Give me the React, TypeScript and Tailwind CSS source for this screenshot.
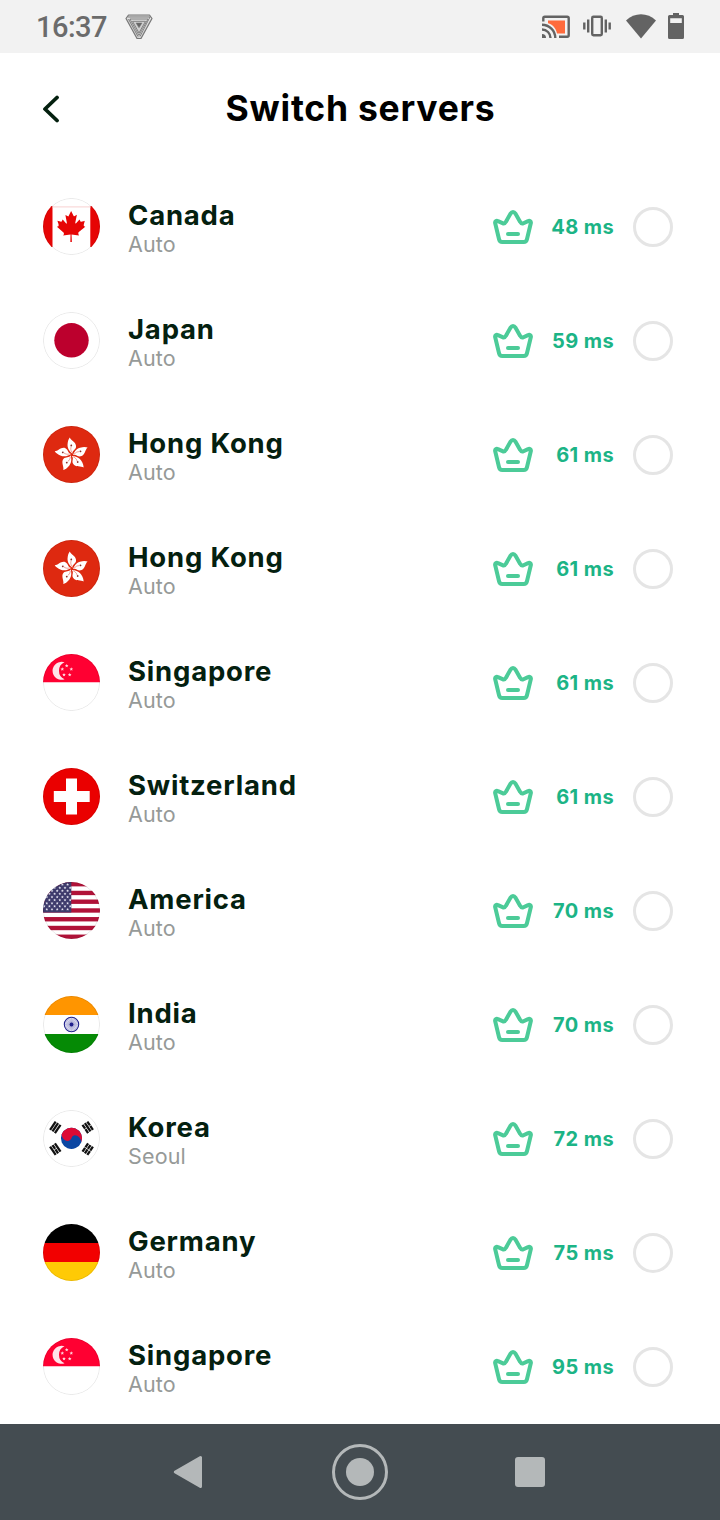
import type { ReactNode } from 'react';
import { useState } from 'react';

interface Server {
  id: number;
  country: string;
  city: string;
  ping: number;
  flag: ReactNode;
}

const FIVE = [0, 72, 144, 216, 288];

function Star({ x, y, r }: { x: number; y: number; r: number }) {
  const points = Array.from({ length: 10 }, (_, i) => {
    const a = (Math.PI / 5) * i - Math.PI / 2;
    const d = i % 2 === 0 ? r : r * 0.45;
    return `${(x + d * Math.cos(a)).toFixed(2)},${(y + d * Math.sin(a)).toFixed(2)}`;
  }).join(' ');
  return <polygon points={points} />;
}

const Canada = (
  <>
    <path fill="#fff" d="M0 0h57v57H0z" />
    <path fill="#e60505" d="M0 8h9.5v41H0zM47.3 8H57v41h-9.7z" />
    <path stroke="#f6c4c4" strokeWidth=".8" d="M9 8.9h39" />
    <path
      fill="#e60505"
      transform="translate(-6.9 2.4) scale(.111)"
      d="M201 232l-13.3 4.4 61.4 54c4.7 13.7-1.6 17.8-5.6 25l66.6-8.4-1.6 67 13.9-.3-3.1-66.6 66.7 8c-4.1-8.7-7.8-13.3-4-27.2l61.3-51-10.7-4c-8.8-6.8 3.8-32.6 5.6-48.9 0 0-35.7 12.3-38 5.8l-9.2-17.5-32.6 35.8c-3.5.9-5-.5-5.9-3.5l15-74.8-23.8 13.4q-3.2 1.3-5.2-2.2l-23-46-23.6 47.8q-2.8 2.5-5 .7L264 130.8l13.7 74.1c-1.1 3-3.7 3.8-6.7 2.2l-31.2-35.3c-4 6.5-6.8 17.1-12.2 19.5s-23.5-4.5-35.6-7c4.2 14.8 17 39.6 9 47.7"
    />
  </>
);

const Japan = (
  <>
    <path fill="#fff" d="M0 0h57v57H0z" />
    <circle cx="28.5" cy="28.3" r="17.2" fill="#bc002d" />
  </>
);

const HongKong = (
  <>
    <path fill="#de2910" d="M0 0h57v57H0z" />
    <g transform="translate(28.8 28.8)">
      {FIVE.map((a) => (
        <g key={a} transform={`rotate(${a + 6})`}>
          <path fill="#fff" d="M.5-1C-1.5-2.5-5-5-5.300-9.500C-5.500-13-4.800-15.500-3.800-17C-2.800-14.200 3.400-13 3.400-8.500C3.400-5-.3-4.500 .5-1Z" />
          <path stroke="#de2910" strokeWidth=".4" d="M-.2-2.500C-1.500-4-2-6-1.500-8" />
          <circle cx="-1.5" cy="-9.2" r=".9" fill="#8e3028" />
        </g>
      ))}
    </g>
  </>
);

const Singapore = (
  <>
    <path fill="#fff" d="M0 0h57v57H0z" />
    <path fill="#ff0032" d="M0 0h57v28.3H0z" />
    <path fill="#ffe3e9" d="M21.500 8.300A9 9 0 1 0 21.500 25.300A9.300 9.300 0 0 1 21.500 8.300Z" />
    <g fill="#ffd5de">
      <Star x={23.7} y={11.8} r={1.9} />
      <Star x={19.3} y={15.2} r={1.9} />
      <Star x={28.3} y={15.2} r={1.9} />
      <Star x={21} y={20.8} r={1.9} />
      <Star x={26.7} y={20.8} r={1.9} />
    </g>
  </>
);

const Switzerland = (
  <>
    <path fill="#ea0000" d="M0 0h57v57H0z" />
    <path fill="#fff" d="M23 10.400h11v12.600h12.700v11H34v12.400H23V34H10.800V23H23z" />
  </>
);

const America = (
  <>
    <path fill="#fff" d="M0 0h57v57H0z" />
    {[0, 2, 4, 6, 8, 10, 12].map((i) => (
      <rect key={i} y={i * 4.38} width="57" height="4.38" fill="#b01238" />
    ))}
    <path fill="#3e3b6c" d="M0 0h28.300v30.500H0z" />
    <g fill="#e4e3f0">
      {[0, 1, 2, 3, 4, 5, 6, 7, 8].map((row) =>
        [0, 1, 2, 3, 4, 5].map((col) => (
          <Star
            key={`${row}-${col}`}
            x={(row % 2 ? 1.2 : -1.4) + col * 5.2}
            y={2.6 + row * 3.1}
            r={1.5}
          />
        ))
      )}
    </g>
  </>
);

const India = (
  <>
    <path fill="#fff" d="M0 0h57v57H0z" />
    <path fill="#ff9500" d="M0 0h57v19H0z" />
    <path fill="#058a05" d="M0 37.900h57V57H0z" />
    <circle cx="28.5" cy="28.5" r="7.2" fill="#e2e2f2" stroke="#20208c" strokeWidth="1.1" />
    {Array.from({ length: 12 }, (_, i) => (
      <path
        key={i}
        d="M28.500 22v13"
        stroke="#5555a8"
        strokeWidth=".25"
        transform={`rotate(${i * 15} 28.5 28.5)`}
      />
    ))}
    <circle cx="28.5" cy="28.5" r="1.9" fill="#20208c" />
  </>
);

function Trigram({ x, y, angle, split }: { x: number; y: number; angle: number; split: boolean[] }) {
  return (
    <g transform={`translate(${x} ${y}) rotate(${angle})`}>
      {split.map((s, i) => (
        <path
          key={i}
          d={s ? 'M-5 0h4.700M.3 0h4.700' : 'M-5 0h10'}
          transform={`translate(0 ${(i - 1) * 2.9})`}
          stroke="#111"
          strokeWidth="2.3"
        />
      ))}
    </g>
  );
}

const Korea = (
  <>
    <path fill="#fff" d="M0 0h57v57H0z" />
    <g transform="translate(28.5 28.3) rotate(22)">
      <circle r="10.6" fill="#0b46a3" />
      <path fill="#dd0a35" d="M-10.600 0A10.600 10.600 0 0 1 10.600 0C8.500-5-.5-6.500 0 0C-.5 6.500-8.500 5-10.600 0Z" />
    </g>
    <Trigram x={12.3} y={17.3} angle={-56} split={[false, false, false]} />
    <Trigram x={44.7} y={17.3} angle={56} split={[true, false, true]} />
    <Trigram x={12.3} y={39.2} angle={56} split={[false, true, false]} />
    <Trigram x={44.7} y={39.2} angle={-56} split={[true, true, true]} />
  </>
);

const Germany = (
  <>
    <path fill="#000" d="M0 0h57v19.100H0z" />
    <path fill="#f20000" d="M0 19.100h57v19H0z" />
    <path fill="#ffca05" d="M0 38.100h57V57H0z" />
  </>
);

const servers: Server[] = [
  { id: 1, country: 'Canada', city: 'Auto', ping: 48, flag: Canada },
  { id: 2, country: 'Japan', city: 'Auto', ping: 59, flag: Japan },
  { id: 3, country: 'Hong Kong', city: 'Auto', ping: 61, flag: HongKong },
  { id: 4, country: 'Hong Kong', city: 'Auto', ping: 61, flag: HongKong },
  { id: 5, country: 'Singapore', city: 'Auto', ping: 61, flag: Singapore },
  { id: 6, country: 'Switzerland', city: 'Auto', ping: 61, flag: Switzerland },
  { id: 7, country: 'America', city: 'Auto', ping: 70, flag: America },
  { id: 8, country: 'India', city: 'Auto', ping: 70, flag: India },
  { id: 9, country: 'Korea', city: 'Seoul', ping: 72, flag: Korea },
  { id: 10, country: 'Germany', city: 'Auto', ping: 75, flag: Germany },
  { id: 11, country: 'Singapore', city: 'Auto', ping: 95, flag: Singapore },
];

function Crown() {
  return (
    <svg width="42" height="38" viewBox="0 0 42 38" fill="none" stroke="#4ccb98" strokeLinecap="round" strokeLinejoin="round">
      <path
        strokeWidth="4"
        d="M3.200 15.200C2.700 13.300 4.400 12.300 6 13.200L10.500 15.200C12 15.900 13 15.400 13.800 13.900L18.600 5.600C19.900 3.400 22.100 3.400 23.400 5.600L28.200 13.900C29 15.400 30 15.900 31.500 15.200L36 13.200C37.600 12.300 39.300 13.300 38.800 15.200L34.900 31.500C34.400 33.500 33.500 34.100 31.800 34.100H10.200C8.500 34.100 7.600 33.500 7.100 31.500Z"
      />
      <path strokeWidth="4" d="M16 26h10" />
    </svg>
  );
}

function StatusBar() {
  return (
    <div className="flex h-[53px] shrink-0 items-center bg-[#f2f2f2] pl-9 pr-9 text-[#636363]">
      <span className="w-[89px] pt-0.5 font-[Roboto] text-[29px] font-medium leading-none tracking-[-0.5px] text-[#6b6b6b]">16:37</span>
      <svg width="28" height="26" viewBox="0 0 28 26" fill="none" stroke="#777" strokeLinejoin="round">
        <path fill="#d0d0d0" strokeWidth="1.2" d="M3.500 1h21L27 4.500 16 24.500h-4L1 4.500z" />
        <path stroke="#f2f2f2" strokeWidth=".7" d="M3 4h22.500L14.500 23.500M4.500 2.500L2.500 5M6 6h17L14 21.500zM25.500 4L14 21.500" />
        <path strokeWidth=".9" d="M3 3h22L15 22.500M3.500 5L13 22.500M5 5h18L14 21.500zM7.500 7.300h13L14 19z" />
        <path fill="#666" strokeWidth=".5" d="M11 9h6L14 13.800z" />
      </svg>
      <div className="ml-auto flex items-center">
        <svg width="28" height="24" viewBox="0 0 28 24" fill="none" stroke="#636363" strokeWidth="2.4">
          <path stroke="none" fill="#ff6b3d" d="M6 5.500h17v13h-8C14 13 10.500 9.500 6 8.300z" />
          <path d="M1.300 6.500V3.200Q1.300 1.700 2.800 1.700H25.200Q26.700 1.700 26.700 3.200V20.300Q26.700 21.800 25.200 21.800H17" />
          <path d="M0 9.700A13.300 13.300 0 0 1 13.300 23M0 14.500A8.500 8.500 0 0 1 8.500 23" />
          <path stroke="none" fill="#636363" d="M0 19a4 4 0 0 1 4 4H0z" />
        </svg>
        <svg className="-mt-0.5 ml-[13px]" width="28" height="22" viewBox="0 0 28 22" fill="none" stroke="#636363" strokeWidth="2.4">
          <rect x="9.2" y="1.8" width="9.6" height="18.4" rx="1.2" />
          <path d="M1.300 7.500v7M5.200 4.500v13M22.800 4.500v13M26.700 7.500v7" />
        </svg>
        <svg className="-mt-0.5 ml-[15px]" width="30" height="26" viewBox="0 0 30 26" fill="#636363">
          <path d="M0 7.500C8.500-.9 21.500-.9 30 7.500L15 25.500z" />
        </svg>
        <svg className="-mt-0.5 ml-3" width="16" height="26" viewBox="0 0 16 26" fill="#636363">
          <path fillRule="evenodd" d="M5 0h6v2h3.500Q16 2 16 3.500v21Q16 26 14.500 26h-13Q0 26 0 24.500v-21Q0 2 1.500 2H5zM2.200 5.200v4.700h11.600V5.200z" />
        </svg>
      </div>
    </div>
  );
}

function ServerRow({ server, selected, onSelect }: { server: Server; selected: boolean; onSelect: () => void }) {
  return (
    <button onClick={onSelect} className="flex h-[114px] w-full items-center pl-[43px] pr-[47px] text-left">
      <div className="-mt-0.5 size-[57px] shrink-0 overflow-hidden rounded-full">
        <svg width="57" height="57" viewBox="0 0 57 57" fill="none">
          {server.flag}
          <circle cx="28.5" cy="28.5" r="28.1" stroke="#000" strokeOpacity=".12" strokeWidth=".8" />
        </svg>
      </div>
      <div className="ml-7 flex-1 pt-0.5">
        <div className="text-[27.5px] font-bold leading-[32px] tracking-[0.8px] text-[#04200f]">{server.country}</div>
        <div className="text-[21.5px] leading-[26px] tracking-[0.15px] text-[#969a98]">{server.city}</div>
      </div>
      <Crown />
      <div className="w-20 text-right text-[20px] font-bold leading-6 tracking-[0.4px] text-[#1cb486]">
        {server.ping} ms
      </div>
      <div className="ml-[19px] flex size-10 items-center justify-center rounded-full border-3 border-[#e5e5e5]">
        {selected && <div className="size-5 rounded-full bg-[#4ccb98]" />}
      </div>
    </button>
  );
}

export default function App() {
  const [selected, setSelected] = useState<number | null>(null);

  return (
    <div className="flex h-[1520px] w-[720px] flex-col overflow-hidden bg-white font-[Inter,sans-serif]">
      <StatusBar />

      {/* Header */}
      <header className="mb-[7px] grid h-[110px] shrink-0 grid-cols-[100px_1fr_100px] items-center">
        <button className="pl-[42px] pt-0.5" aria-label="Back">
          <svg width="18" height="28" viewBox="0 0 18 28" fill="none" stroke="#04200f" strokeWidth="3.8" strokeLinecap="round" strokeLinejoin="round">
            <path d="M15 2.500L3 14l12 11.500" />
          </svg>
        </button>
        <h1 className="pl-px pt-0.5 text-center text-[35.5px] font-bold leading-none tracking-[0.75px] text-black">Switch servers</h1>
      </header>

      {/* Server list */}
      <main className="shrink-0">
        {servers.map((s) => (
          <ServerRow key={s.id} server={s} selected={selected === s.id} onSelect={() => setSelected(s.id)} />
        ))}
      </main>

      {/* Navigation bar */}
      <nav className="grid h-24 shrink-0 grid-cols-[202px_316px_202px] items-center bg-[#444c51] text-[#b4b8b9]">
        <svg className="justify-self-end" width="30" height="34" viewBox="0 0 30 34" fill="currentColor" stroke="currentColor" strokeWidth="3" strokeLinejoin="round">
          <path d="M3.300 17L28.500 2.500v29z" />
        </svg>
        <svg className="justify-self-center" width="56" height="56" viewBox="0 0 56 56" fill="none">
          <circle cx="28" cy="28" r="26.5" stroke="currentColor" strokeWidth="3" />
          <circle cx="28" cy="28" r="14" fill="currentColor" />
        </svg>
        <div className="-ml-[3px] size-[30px] rounded-[3px] bg-[#b4b8b9]" />
      </nav>
    </div>
  );
}
